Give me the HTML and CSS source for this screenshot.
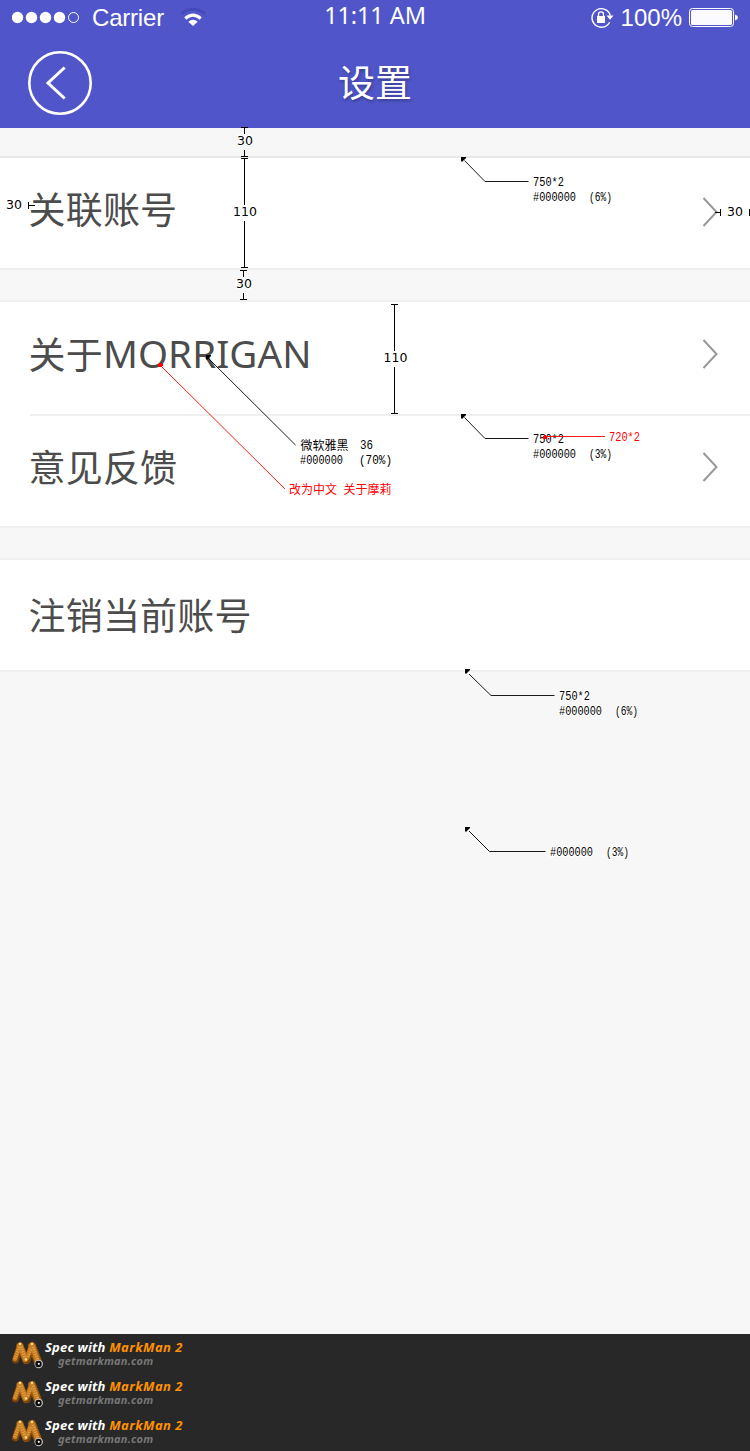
FILE: index.html
```html
<!DOCTYPE html>
<html lang="zh-CN">
<head>
<meta charset="utf-8">
<title>设置</title>
<link rel="stylesheet" href="styles.css">
</head>
<body>
<svg width="0" height="0" class="defs">
  <defs>
    <symbol id="next" viewBox="0 0 16 32"><path d="M1.500 2 14.500 16 1.500 30" fill="none" stroke="#999" stroke-width="2"/></symbol>
    <symbol id="ruler" viewBox="0 0 34 30">
      <g fill="none" stroke-linecap="round">
        <path d="M4.500 21 9 7" stroke="#7d440a" stroke-width="7"/>
        <path d="M9 7 15 21.500" stroke="#a4601a" stroke-width="7"/>
        <path d="M16 21.500 21 7" stroke="#7d440a" stroke-width="7"/>
        <path d="M21 7 27.500 24" stroke="#9b5a12" stroke-width="8"/>
        <path d="M4 20 9 6M20.500 7 16 19" stroke="#c57b20" stroke-width="4.500"/>
        <path d="M9 6 14.500 20.500M21 6 26.500 22" stroke="#c98024" stroke-width="5"/>
        <path d="M10 8l4.500 12M22 8l5 13M4 20 8 8M17 18l3-8" stroke="#e9ab50" stroke-width="3" stroke-linecap="butt" stroke-dasharray=".8 1.600"/>
      </g>
      <g fill="#ffe08a"><circle cx="9" cy="5" r="1.200"/><circle cx="21" cy="5" r="1.200"/><circle cx="15" cy="20.500" r="1.200"/></g>
      <circle cx="27.700" cy="25" r="4.200" fill="#ccc"/><circle cx="27.500" cy="25" r="3.200" fill="#080808"/><circle cx="27.800" cy="24.800" r="1.100" fill="#fff"/>
    </symbol>
    <symbol id="tip" viewBox="0 0 5 5"><path d="M0 0h5v1.500H4v1H3v1H2v1H0z"/></symbol>
  </defs>
</svg>
<div class="page">
  <header class="header">
    <div class="status">
      <div class="signal">
        <svg width="68" height="14" viewBox="0 0 68 14"><g fill="#fff"><circle cx="5.500" cy="6.500" r="5.700"/><circle cx="19.500" cy="6.500" r="5.700"/><circle cx="33.500" cy="6.500" r="5.700"/><circle cx="47.500" cy="6.500" r="5.700"/></g><circle cx="61.500" cy="6.500" r="5" fill="none" stroke="#fff"/></svg>
        <span class="carrier">Carrier</span>
        <svg width="26" height="20" viewBox="0 0 26 20" fill="none"><path d="M1.200 5.600Q13-3.200 24.800 5.600" stroke="#4348b7" stroke-width="2.600"/><path d="M5.300 10.500Q13 3.800 20.700 10.500" stroke="#fff" stroke-width="3"/><path d="M8.300 13.800Q13 9.800 17.700 13.800L13 18z" fill="#fff"/></svg>
      </div>
      <span class="time">11:11 AM</span>
      <div class="power">
        <svg width="24" height="22" viewBox="0 0 24 22"><path d="M18.600 15.200A9.300 9.300 0 1 1 19.300 8.500" fill="none" stroke="#fff" stroke-width="1.400"/><path d="M15.500 8.500h7L19 12.800z" fill="#fff"/><path d="M6 9h8v7H6z" fill="#fff"/><path d="M7.500 9.500V7.400a2.500 2.500 0 0 1 5 0V9.500" fill="none" stroke="#fff" stroke-width="1.300"/></svg>
        <span class="percent">100%</span>
        <svg width="49" height="20" viewBox="0 0 49 20"><rect x=".5" y=".5" width="44" height="18" rx="3" fill="none" stroke="#fff"/><rect x="2" y="2" width="41" height="15" rx="1.500" fill="#fafaff"/><path d="M46 6.500q3 1 3 3t-3 3z" fill="#fff"/></svg>
      </div>
    </div>
    <div class="nav">
      <svg class="back" width="64" height="64" viewBox="0 0 64 64" fill="none" stroke="#fff"><circle cx="32" cy="32" r="30.700" stroke-width="2.600"/><path d="M36.700 16.500 20 32l16.700 15.500" stroke-width="3"/></svg>
      <h1 class="title">设置</h1>
    </div>
  </header>
  <main class="content">
    <section class="group first">
      <div class="row"><span>关联账号</span><svg class="next" width="16" height="32"><use href="#next"/></svg></div>
    </section>
    <section class="group">
      <div class="row tall"><span>关于<span class="latin">MORRIGAN</span></span><svg class="next" width="16" height="32"><use href="#next"/></svg></div>
      <div class="divider"></div>
      <div class="row raised"><span>意见反馈</span><svg class="next" width="16" height="32"><use href="#next"/></svg></div>
    </section>
    <section class="group">
      <div class="row logout"><span>注销当前账号</span></div>
    </section>
  </main>
  <footer class="footer">
    <div class="credit"><svg width="34" height="30"><use href="#ruler"/></svg><div><p class="made">Spec with <b>MarkMan 2</b></p><p class="site">getmarkman.com</p></div></div>
    <div class="credit"><svg width="34" height="30"><use href="#ruler"/></svg><div><p class="made">Spec with <b>MarkMan 2</b></p><p class="site">getmarkman.com</p></div></div>
    <div class="credit"><svg width="34" height="30"><use href="#ruler"/></svg><div><p class="made">Spec with <b>MarkMan 2</b></p><p class="site">getmarkman.com</p></div></div>
  </footer>
  <svg class="notes" width="750" height="1334" viewBox="0 0 750 1334">
    <path class="measure" d="M241 127.500h7M244.500 127v7M244.500 150v6M241 156.500h7M241 158.500h7M244.500 158v47M244.500 221v46M241 267.500h7M240 270.500h7M243.500 270v7M243.500 293v6M240 299.500h7M391 304.500h7M394.500 304v47M394.500 367v46M391 413.500h7M28.500 202v7M29 205.500h6M715 212.500h5M720.500 209v7M749.500 209v7"/>
    <path class="leader" d="M464.500 160.500 485 181.500H528.500M464.500 417.500 485 438.500H528.500M469 674 491 695.500H554.500M469 831 489.500 851.500H545.500M208 358 295.500 445"/>
    <use href="#tip" x="461" y="157" width="5" height="5"/><use href="#tip" x="461" y="414" width="5" height="5"/><use href="#tip" x="465" y="669" width="5" height="5"/><use href="#tip" x="465" y="827" width="5" height="5"/><use href="#tip" x="206" y="355" width="5" height="5"/>
    <g class="size">
      <text x="237" y="145" textLength="16">30</text><text x="233" y="216" textLength="24">110</text><text x="236" y="288" textLength="16">30</text><text x="6" y="209" textLength="16">30</text><text x="727" y="216" textLength="16">30</text><text x="383.500" y="362" textLength="24">110</text>
    </g>
    <g class="spec">
      <text x="533" y="186" textLength="31" lengthAdjust="spacingAndGlyphs">750*2</text><text x="533" y="201" textLength="43" lengthAdjust="spacingAndGlyphs">#000000</text><text x="589" y="201" textLength="23" lengthAdjust="spacingAndGlyphs">(6%)</text>
      <text x="533" y="443" textLength="31" lengthAdjust="spacingAndGlyphs">750*2</text><text x="533" y="458" textLength="43" lengthAdjust="spacingAndGlyphs">#000000</text><text x="589" y="458" textLength="23" lengthAdjust="spacingAndGlyphs">(3%)</text>
      <text x="559" y="700" textLength="31" lengthAdjust="spacingAndGlyphs">750*2</text><text x="559" y="715" textLength="43" lengthAdjust="spacingAndGlyphs">#000000</text><text x="615" y="715" textLength="23" lengthAdjust="spacingAndGlyphs">(6%)</text>
      <text x="550" y="856" textLength="43" lengthAdjust="spacingAndGlyphs">#000000</text><text x="606" y="856" textLength="23" lengthAdjust="spacingAndGlyphs">(3%)</text>
      <text class="han" x="300.500" y="450" textLength="48">微软雅黑</text><text x="360" y="449" textLength="13" lengthAdjust="spacingAndGlyphs">36</text><text x="300" y="464" textLength="43" lengthAdjust="spacingAndGlyphs">#000000</text><text x="359" y="464" textLength="33" lengthAdjust="spacingAndGlyphs">(70%)</text>
      <g class="red"><text x="609" y="441" textLength="31" lengthAdjust="spacingAndGlyphs">720*2</text><text class="han" x="289" y="494" textLength="48">改为中文</text><text class="han" x="343.500" y="494" textLength="48">关于摩莉</text></g>
    </g>
    <path class="leader red" d="M161 366 285 489"/>
    <path class="leader red" d="M545 436.500H605"/>
    <path d="M159 363h3v1h1v2h-1v1h-4v-3h1zM543 436h1v-1h2v1h1v3h-4z" fill="red"/>
  </svg>
</div>
</body>
</html>
```
FILE: styles.css
```css
* { box-sizing: border-box; }
body, h1, p { margin: 0; }
body { background: #f7f7f7; font-family: "Noto Sans CJK SC", sans-serif; }
svg { display: block; flex: none; }
.defs { position: absolute; }
.page { position: relative; display: flex; flex-direction: column; width: 750px; height: 1451px; }

.header { height: 128px; background: #5056c9; color: #fff; }
.status { display: grid; grid-template-columns: 1fr auto 1fr; height: 36px; padding: 0 12px; align-items: center; }
.signal { display: flex; align-items: center; }
.carrier { width: 75px; margin: 0 1px 0 12px; font: 24px/36px "Liberation Sans", Arial, sans-serif; letter-spacing: -.2px; }
.signal svg:last-child { margin-left: 12px; }
.time { height: 36px; font: 23.500px/31px "Noto Sans", sans-serif; letter-spacing: -.1px; }
.power { display: flex; align-items: center; justify-content: flex-end; }
.percent { margin: 0 7px 0 6px; font: 24px/36px "Liberation Sans", Arial, sans-serif; }
.nav { display: grid; grid-template-columns: 64px 1fr 64px; height: 92px; padding: 15px 28px 0; }
.title { font-size: 37px; font-weight: 400; line-height: 61px; text-align: center; text-shadow: 1px 2px 3px rgba(0, 0, 0, .3); }

.content { flex: 1; padding-top: 28px; }
.group { margin-bottom: 30px; border: solid #efefef; border-width: 2px 0; background: #fff; }
.group.first { border-top-color: #e8e8e8; }
.row { display: flex; align-items: flex-start; justify-content: space-between; height: 110px; padding: 0 32px 0 28.500px; color: #4c4c4c; font-size: 37px; line-height: 101px; letter-spacing: .2px; }
.row .next { margin-top: 38px; }
.row.tall { height: 112px; line-height: 102px; }
.row.tall .next { margin-top: 36px; }
.row.raised .next { margin-top: 35px; }
.row.logout { line-height: 108px; }
.latin { display: inline-block; font: 38.500px/40px "Noto Sans", sans-serif; letter-spacing: .1px; transform: translateY(-1px); }
.divider { height: 2px; margin-left: 30px; background: #efefef; }

.footer { height: 117px; background: #282828; }
.credit { display: flex; height: 39px; padding: 5px 0 0 11px; font-family: "Noto Sans", sans-serif; font-style: italic; font-weight: 700; }
.made { color: #fff; font-size: 13px; line-height: 17px; letter-spacing: .2px; }
.made b { color: #ff9000; font-weight: 700; letter-spacing: .45px; }
.site { padding-left: 13px; color: #777; font-size: 11px; line-height: 9px; letter-spacing: .2px; }

.notes { position: absolute; top: 0; left: 0; }
.measure, .leader { fill: none; stroke: #000; stroke-width: 1; }
.measure { shape-rendering: crispEdges; }
.leader { stroke-width: .9; }
.leader.red { stroke: red; }
.size { font: 12.500px "DejaVu Sans", sans-serif; paint-order: stroke; stroke: #fff; stroke-width: 2px; }
.spec { font: 12px "Liberation Mono", monospace; paint-order: stroke; stroke: #fff; stroke-width: 2px; }
.han { font: 12px "Noto Sans CJK SC", sans-serif; }
.spec .red { fill: red; }
```
